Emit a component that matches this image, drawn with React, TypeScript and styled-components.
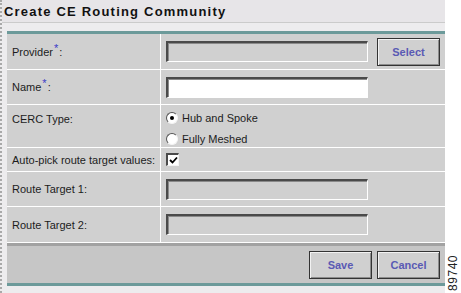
import React from "react";
import styled, { createGlobalStyle } from "styled-components";

const GlobalStyle = createGlobalStyle`
  html, body {
    margin: 0;
    padding: 0;
    background: #ffffff;
    font-family: "Liberation Sans", Arial, sans-serif;
  }
`;

const Page = styled.div`
  display: flex;
  width: 461px;
  height: 293px;
  overflow: hidden;
`;

const Frame = styled.div`
  width: 443px;
  height: 293px;
  border-left: 2px dotted #a9a9a9;
  background: #edecee;
  display: flex;
  flex-direction: column;
`;

const TitleBar = styled.div`
  height: 22px;
  background: #e7e5e8;
  border-bottom: 1px solid #cbcbcb;
  display: flex;
  align-items: center;
  padding-left: 2px;
  font-size: 13px;
  font-weight: bold;
  letter-spacing: 1.2px;
  color: #111;
`;

const Form = styled.div`
  margin: 8px 0 0 5px;
  border-top: 3px solid #6c9a9a;
  display: flex;
  flex-direction: column;
`;

const Row = styled.div<{ $h: number }>`
  display: grid;
  grid-template-columns: 153px 1px 1fr;
  height: ${({ $h }) => $h}px;
  border-bottom: 1px solid #ffffff;
  background: #d0d0d0;
  box-sizing: border-box;
`;

const Divider = styled.div`
  background: #ffffff;
`;

const Label = styled.div<{ $top?: boolean }>`
  display: flex;
  align-items: ${({ $top }) => ($top ? "flex-start" : "center")};
  padding: ${({ $top }) => ($top ? "8px" : "0")} 0 0 5px;
  font-size: 11px;
  color: #1c1c1c;
`;

const Req = styled.span`
  color: #3a3ac8;
  font-size: 11px;
  position: relative;
  top: -4px;
  margin: 0 1px;
`;

const Field = styled.div<{ $top?: boolean }>`
  display: flex;
  align-items: ${({ $top }) => ($top ? "flex-start" : "center")};
  justify-content: space-between;
  padding: 0 5px;
`;

const TextBox = styled.div<{ $white?: boolean }>`
  width: 202px;
  height: 21px;
  box-sizing: border-box;
  background: ${({ $white }) => ($white ? "#ffffff" : "#d0d0d0")};
  border-top: 2px solid #4a4a4a;
  border-left: 2px solid #4a4a4a;
  border-right: 1px solid #ffffff;
  border-bottom: 1px solid #ffffff;
  box-shadow: inset 1px 1px #8a8a8a;
`;

const Button = styled.div`
  width: 63px;
  height: 28px;
  box-sizing: border-box;
  border: 1px solid #333333;
  box-shadow: inset 1px 1px #f2f2f2, inset -1px -1px #8c8c8c;
  background: #d0d0d0;
  display: flex;
  align-items: center;
  justify-content: center;
  font-size: 11px;
  font-weight: bold;
  color: #5a5ab4;
`;

const RadioGroup = styled.div`
  display: flex;
  flex-direction: column;
  gap: 8px;
  padding-top: 6px;
`;

const Option = styled.div`
  display: flex;
  align-items: center;
  gap: 4px;
  font-size: 11px;
  color: #1c1c1c;
  height: 13px;
`;

const Radio = styled.span<{ $on?: boolean }>`
  width: 12px;
  height: 12px;
  box-sizing: border-box;
  border-radius: 50%;
  background: #ffffff;
  border: 1.5px solid;
  border-color: #555 #f4f4f4 #f4f4f4 #555;
  display: flex;
  align-items: center;
  justify-content: center;
  &::after {
    content: "";
    width: 4px;
    height: 4px;
    border-radius: 50%;
    background: ${({ $on }) => ($on ? "#000" : "transparent")};
  }
`;

const Check = styled.span`
  width: 13px;
  height: 13px;
  box-sizing: border-box;
  background: #ffffff;
  border-top: 2px solid #4a4a4a;
  border-left: 2px solid #4a4a4a;
  border-right: 1px solid #f4f4f4;
  border-bottom: 1px solid #f4f4f4;
  display: flex;
  align-items: center;
  justify-content: center;
`;

const Footer = styled.div`
  margin-left: 5px;
  border-top: 3px solid #a2a2a2;
  border-bottom: 3px solid #6c9a9a;
  background: #c6c6c6;
  height: 37px;
  display: flex;
  align-items: center;
  justify-content: flex-end;
  gap: 5px;
  padding-right: 5px;
`;

const Side = styled.div`
  flex: 1;
  display: flex;
  align-items: flex-end;
  justify-content: center;
  padding-bottom: 2px;
`;

const FigNo = styled.div`
  writing-mode: vertical-rl;
  transform: rotate(180deg);
  font-size: 12px;
  letter-spacing: 0.5px;
  color: #222;
`;

export default function App() {
  return (
    <>
      <GlobalStyle />
      <Page>
        <Frame>
          <TitleBar>Create CE Routing Community</TitleBar>
          <Form>
            <Row $h={36}>
              <Label>
                Provider<Req>*</Req>:
              </Label>
              <Divider />
              <Field>
                <TextBox />
                <Button>Select</Button>
              </Field>
            </Row>
            <Row $h={35}>
              <Label>
                Name<Req>*</Req>:
              </Label>
              <Divider />
              <Field>
                <TextBox $white />
              </Field>
            </Row>
            <Row $h={43}>
              <Label $top>CERC Type:</Label>
              <Divider />
              <Field $top>
                <RadioGroup>
                  <Option>
                    <Radio $on />
                    Hub and Spoke
                  </Option>
                  <Option>
                    <Radio />
                    Fully Meshed
                  </Option>
                </RadioGroup>
              </Field>
            </Row>
            <Row $h={24}>
              <Label>Auto-pick route target values:</Label>
              <Divider />
              <Field>
                <Check>
                  <svg width="9" height="9" viewBox="0 0 9 9">
                    <path d="M1 4 L3.5 6.5 L8 1.5" stroke="#000" strokeWidth="1.8" fill="none" />
                  </svg>
                </Check>
              </Field>
            </Row>
            <Row $h={35}>
              <Label>Route Target 1:</Label>
              <Divider />
              <Field>
                <TextBox />
              </Field>
            </Row>
            <Row $h={36}>
              <Label>Route Target 2:</Label>
              <Divider />
              <Field>
                <TextBox />
              </Field>
            </Row>
          </Form>
          <Footer>
            <Button>Save</Button>
            <Button>Cancel</Button>
          </Footer>
        </Frame>
        <Side>
          <FigNo>89740</FigNo>
        </Side>
      </Page>
    </>
  );
}
